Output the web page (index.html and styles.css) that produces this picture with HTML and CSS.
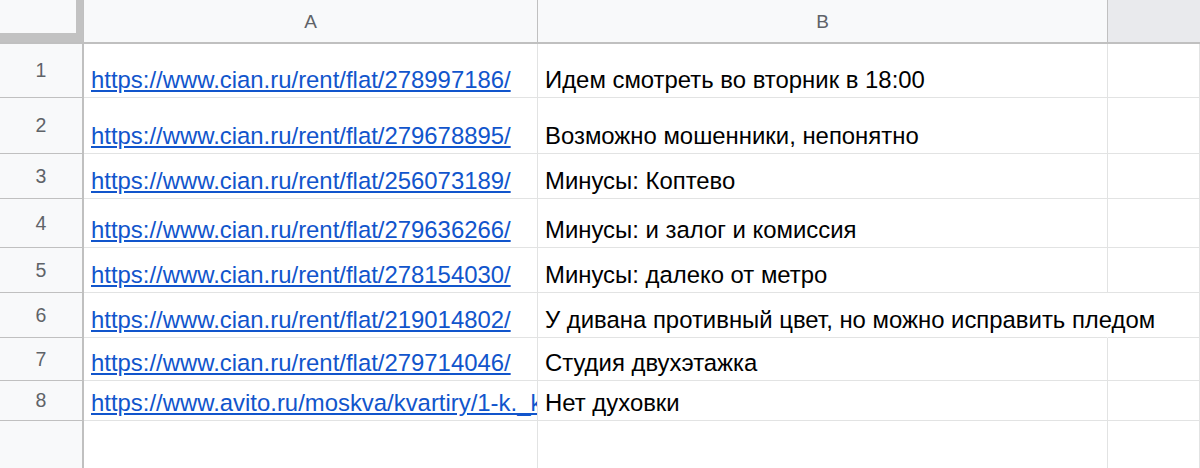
FILE: index.html
```html
<!DOCTYPE html>
<html lang="ru">
<head>
<meta charset="utf-8">
<title>Sheet</title>
<link rel="stylesheet" href="styles.css">
</head>
<body>
<div class="sheet">
  <div class="corner"><div class="corner-inner"></div></div>
  <div class="colhead">A</div>
  <div class="colhead">B</div>
  <div class="colhead colhead-c"></div>

  <div class="rowhead r1">1</div>
  <div class="cell r1"><a href="#">https://www.cian.ru/rent/flat/278997186/</a></div>
  <div class="cell r1">Идем смотреть во вторник в 18:00</div>
  <div class="cell r1"></div>

  <div class="rowhead r2">2</div>
  <div class="cell r2"><a href="#">https://www.cian.ru/rent/flat/279678895/</a></div>
  <div class="cell r2">Возможно мошенники, непонятно</div>
  <div class="cell r2"></div>

  <div class="rowhead r3">3</div>
  <div class="cell r3"><a href="#">https://www.cian.ru/rent/flat/256073189/</a></div>
  <div class="cell r3">Минусы: Коптево</div>
  <div class="cell r3"></div>

  <div class="rowhead r4">4</div>
  <div class="cell r4"><a href="#">https://www.cian.ru/rent/flat/279636266/</a></div>
  <div class="cell r4">Минусы: и залог и комиссия</div>
  <div class="cell r4"></div>

  <div class="rowhead r5">5</div>
  <div class="cell r5"><a href="#">https://www.cian.ru/rent/flat/278154030/</a></div>
  <div class="cell r5">Минусы: далеко от метро</div>
  <div class="cell r5"></div>

  <div class="rowhead r6">6</div>
  <div class="cell r6"><a href="#">https://www.cian.ru/rent/flat/219014802/</a></div>
  <div class="cell r6 overflow">У дивана противный цвет, но можно исправить пледом</div>
  <div class="cell r6"></div>

  <div class="rowhead r7">7</div>
  <div class="cell r7"><a href="#">https://www.cian.ru/rent/flat/279714046/</a></div>
  <div class="cell r7">Студия двухэтажка</div>
  <div class="cell r7"></div>

  <div class="rowhead r8">8</div>
  <div class="cell r8 clip"><a href="#">https://www.avito.ru/moskva/kvartiry/1-k._kvartira_38_m_5_9_et.</a></div>
  <div class="cell r8">Нет духовки</div>
  <div class="cell r8"></div>

  <div class="rowhead r9"></div>
  <div class="cell r9"></div>
  <div class="cell r9"></div>
  <div class="cell r9"></div>
</div>
</body>
</html>
```

FILE: styles.css
```css
html, body {
  margin: 0;
  padding: 0;
  background: #ffffff;
  height: 100%;
  overflow: hidden;
}

.sheet {
  display: grid;
  grid-template-columns: 84px 454px 570px 1fr;
  grid-template-rows: 44px 54px 56px 45px 49px 45px 45px 43px 40px 1fr;
  height: 468px;
  font-family: "Liberation Sans", Arial, sans-serif;
}

.corner {
  background: #c2c2c2;
  border-bottom: 2px solid #c0c0c0;
  border-right: 1px solid #c0c0c0;
  box-sizing: border-box;
  display: flex;
}

.corner-inner {
  width: 76px;
  height: 33px;
  background: #f8f9fa;
}

.colhead {
  background: #f8f9fa;
  border-bottom: 2px solid #c0c0c0;
  border-right: 1px solid #c0c0c0;
  box-sizing: border-box;
  display: flex;
  align-items: center;
  justify-content: center;
  font-size: 19px;
  color: #5f6368;
  padding-top: 1px;
}

.colhead-c {
  background: #e9eaed;
  border-right: none;
}

.rowhead {
  background: #f8f9fa;
  border-bottom: 1px solid #c0c0c0;
  border-right: 2px solid #c0c0c0;
  box-sizing: border-box;
  display: flex;
  align-items: center;
  justify-content: center;
  font-size: 19.5px;
  color: #5f6368;
}

.rowhead.r9 {
  border-bottom: none;
}

.cell {
  border-bottom: 1px solid #e2e3e3;
  border-right: 1px solid #e2e3e3;
  box-sizing: border-box;
  display: flex;
  align-items: flex-end;
  padding: 0 0 3px 7px;
  font-size: 23.9px;
  color: #000000;
  white-space: nowrap;
  min-width: 0;
}

.cell.r9 {
  border-bottom: none;
}

.cell a {
  color: #1155cc;
  text-decoration: underline;
}

.clip {
  overflow: hidden;
}

.overflow {
  overflow: visible;
  border-right-color: transparent;
}
```
